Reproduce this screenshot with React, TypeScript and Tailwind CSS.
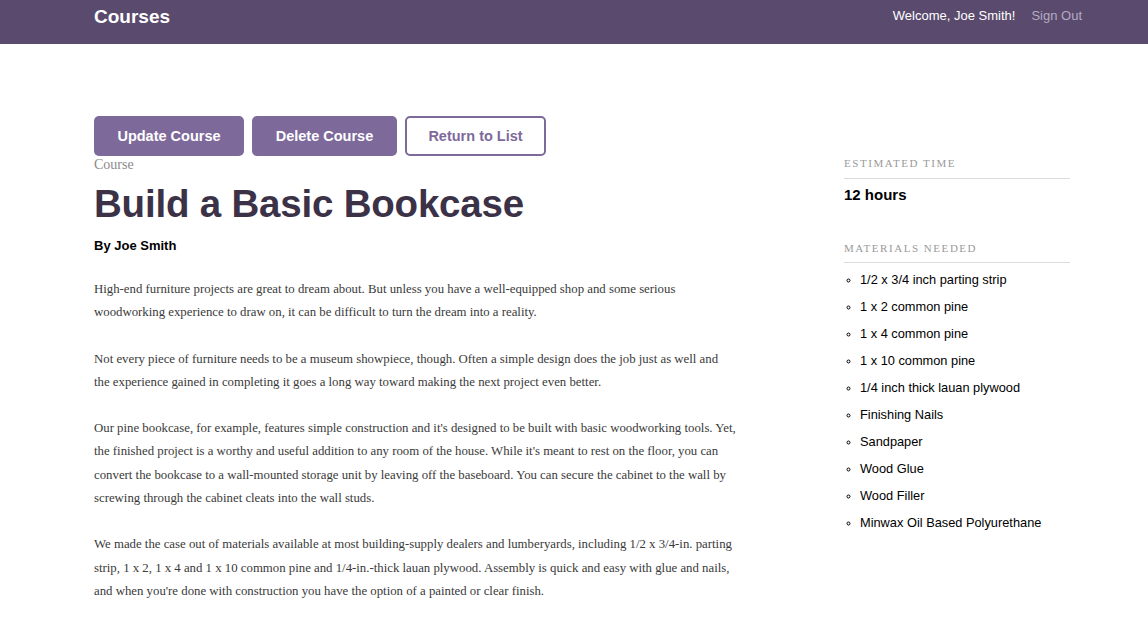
import React from 'react';

const materials = [
    '1/2 x 3/4 inch parting strip',
    '1 x 2 common pine',
    '1 x 4 common pine',
    '1 x 10 common pine',
    '1/4 inch thick lauan plywood',
    'Finishing Nails',
    'Sandpaper',
    'Wood Glue',
    'Wood Filler',
    'Minwax Oil Based Polyurethane',
];

const paragraphs = [
    'High-end furniture projects are great to dream about. But unless you have a well-equipped shop and some serious woodworking experience to draw on, it can be difficult to turn the dream into a reality.',
    'Not every piece of furniture needs to be a museum showpiece, though. Often a simple design does the job just as well and the\u00a0experience gained in completing it goes a long way toward making the next project even better.',
    "Our pine bookcase, for example, features simple construction and it's designed to be built with basic woodworking tools. Yet, the finished project is a worthy and useful addition to any room of the house. While it's meant to rest on the floor, you can convert the bookcase to a wall-mounted storage unit by leaving off the baseboard. You can secure the cabinet to the wall by screwing through the cabinet cleats into the wall studs.",
    "We made the case out of materials available at most building-supply dealers and lumberyards, including 1/2 x 3/4-in. parting strip, 1 x 2, 1 x 4 and 1 x 10 common pine and 1/4-in.-thick lauan plywood. Assembly is quick and easy with glue and nails, and when you're done with construction you have the option of a painted or clear finish.",
];

const SideHeading = ({ children }: { children: React.ReactNode }) => (
    <h3 className="font-['Liberation_Serif',serif] text-[11px] tracking-[0.14em] uppercase text-[#9a9a9a] pb-[6px] border-b border-[#dcdcdc]">
        {children}
    </h3>
);

export default function App() {
    return (
        <div className="min-h-[620px] bg-white font-['Liberation_Sans',Arial,sans-serif]">
            {/* header */}
            <header className="h-[44px] bg-[#5a4a6d]">
                <div className="flex items-start justify-between pl-[94px] pr-[66px] pt-[6px]">
                    <h1 className="text-[19px] font-bold text-white leading-[22px]">Courses</h1>
                    <nav className="flex gap-[16px] text-[13px] leading-[20px]">
                        <span className="text-white">Welcome, Joe Smith!</span>
                        <a className="text-[#b4aac2]">Sign Out</a>
                    </nav>
                </div>
            </header>

            <main className="flex pl-[94px] pt-[72px]">
                <section className="w-[646px]">
                    <div className="flex gap-[8px]">
                        <button className="h-[40px] w-[150px] rounded-[5px] bg-[#7e699b] text-white font-bold text-[14.5px] pt-[1px]">
                            Update Course
                        </button>
                        <button className="h-[40px] w-[145px] rounded-[5px] bg-[#7e699b] text-white font-bold text-[14.5px] pt-[1px]">
                            Delete Course
                        </button>
                        <button className="h-[40px] w-[141px] rounded-[5px] border-2 border-[#7e699b] bg-white text-[#7e699b] font-bold text-[14.5px] pt-[1px]">
                            Return to List
                        </button>
                    </div>

                    <p className="font-['Liberation_Serif',serif] text-[14px] leading-[16px] text-[#8a8a8a] mt-[1px]">Course</p>
                    <h2 className="text-[38.5px] font-bold leading-[46px] text-[#3c3248] mt-[8px] tracking-[-0.2px]">
                        Build a Basic Bookcase
                    </h2>
                    <p className="text-[13px] font-bold text-black mt-[11px] leading-[16px]">By Joe Smith</p>

                    <div className="mt-[24px] font-['Liberation_Serif',serif] text-[12.8px] leading-[23.3px] text-[#3a3a3a]">
                        {paragraphs.map((p, i) => (
                            <p key={i} className="mb-[23px]">{p}</p>
                        ))}
                    </div>
                </section>

                <aside className="w-[226px] ml-[104px] pt-[39px]">
                    <SideHeading>Estimated Time</SideHeading>
                    <p className="text-[15px] font-bold text-black mt-[7px] leading-[18px]">12 hours</p>

                    <div className="mt-[36px]">
                        <SideHeading>Materials Needed</SideHeading>
                        <ul className="mt-[3px] list-[circle] pl-[16px] text-[12.8px] text-black">
                            {materials.map((m) => (
                                <li key={m} className="leading-[27px] marker:text-[10px]">{m}</li>
                            ))}
                        </ul>
                    </div>
                </aside>
            </main>
        </div>
    );
}
